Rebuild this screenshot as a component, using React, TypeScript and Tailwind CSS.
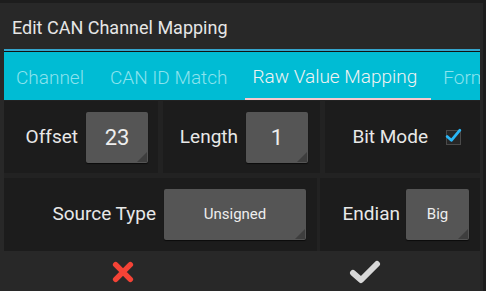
import React from "react";

const Box = ({ w, children, small }: { w: string; children: React.ReactNode; small?: boolean }) => (
  <div
    className={`relative ${w} h-[51px] bg-[#555555] rounded-[2px] flex items-center justify-center shadow-[0_1px_1px_rgba(0,0,0,0.6)] text-[#eeeeee] ${small ? "text-[15px]" : "text-[22px]"}`}
  >
    {children}
    <div className="absolute right-[1px] bottom-[1px] w-0 h-0 border-l-[10px] border-l-transparent border-b-[10px] border-b-[#3e3e3e]" />
  </div>
);

export default function App() {
  return (
    <div
      className="w-[486px] h-[291px] bg-[#1d1d1d] overflow-hidden relative"
      style={{ fontFamily: "Roboto, 'Open Sans', sans-serif" }}
    >
      <div className="w-[483px] h-[288px] mt-[3px] bg-[#282828] flex flex-col">
        <div className="h-[46px] pl-[12px] flex items-center text-[18px] text-[#e6e6e6] pt-[2px]">
          Edit CAN Channel Mapping
        </div>
        <div className="mx-[4px] mr-[3px] h-[2px] bg-[#34a5cc]" />
        <div className="mx-[4px] mr-[3px] h-[1px] bg-[#111]" />
        <div className="mx-[4px] mr-[3px] h-[48px] bg-[#00bcd4] flex items-end overflow-hidden whitespace-nowrap text-[19px] font-light">
          <div className="pl-[12px] pr-[26px] h-full flex items-center pt-[4px] text-[#8ce3ee]">Channel</div>
          <div className="pr-[18px] h-full flex items-center pt-[4px] text-[#8ce3ee]">CAN ID Match</div>
          <div className="pl-[7px] pr-[14px] h-full flex items-center text-[#f2f2f2] border-b-[2px] border-[#f7c8cc] pt-[4px]">
            Raw Value Mapping
          </div>
          <div className="pl-[12px] h-full flex items-center pt-[4px] text-[#8ce3ee]">Format</div>
        </div>
        <div className="mx-[4px] mr-[3px] bg-[#222222] flex flex-col gap-[5px] pt-[1px] text-[19px] text-[#e8e8e8]">
          <div className="flex gap-[5px] h-[72px]">
            <div className="w-[154px] bg-[#1c1c1c] flex items-center justify-end pr-[10px] gap-[8px]">
              <span>Offset</span>
              <Box w="w-[62px]">23</Box>
            </div>
            <div className="w-[157px] bg-[#1c1c1c] flex items-center justify-end pr-[12px] gap-[8px]">
              <span>Length</span>
              <Box w="w-[62px]">1</Box>
            </div>
            <div className="flex-1 bg-[#1c1c1c] flex items-center justify-end pr-[19px] gap-[18px]">
              <span>Bit Mode</span>
              <div className="relative w-[15px] h-[15px] border border-[#4a4a4a] bg-[#262626]">
                <svg viewBox="0 0 16 16" className="absolute -top-[4px] -right-[2px] w-[17px] h-[17px]">
                  <path d="M2 9 L6 12.5 L14 3" fill="none" stroke="#29b6f6" strokeWidth="2.6" strokeLinecap="round" strokeLinejoin="round" />
                </svg>
              </div>
            </div>
          </div>
          <div className="flex gap-[3px] h-[73px]">
            <div className="w-[313px] bg-[#1c1c1c] flex items-center justify-end pr-[11px] gap-[8px]">
              <span>Source Type</span>
              <Box w="w-[142px]" small>Unsigned</Box>
            </div>
            <div className="flex-1 bg-[#1c1c1c] flex items-center justify-end pr-[11px] gap-[6px]">
              <span>Endian</span>
              <Box w="w-[63px]" small>Big</Box>
            </div>
          </div>
        </div>
        <div className="flex-1 flex items-center">
          <div className="w-[246px] flex justify-center pt-[2px]">
            <svg viewBox="0 0 24 24" className="w-[22px] h-[22px]">
              <path d="M4 4 L20 20 M20 4 L4 20" stroke="#f44336" strokeWidth="6" strokeLinecap="round" />
            </svg>
          </div>
          <div className="flex-1 flex justify-center pt-[2px]">
            <svg viewBox="0 0 32 24" className="w-[32px] h-[24px]">
              <path d="M4 13 L12 20 L28 4" fill="none" stroke="#d8d8d8" strokeWidth="6" strokeLinecap="round" strokeLinejoin="round" />
            </svg>
          </div>
        </div>
      </div>
    </div>
  );
}
